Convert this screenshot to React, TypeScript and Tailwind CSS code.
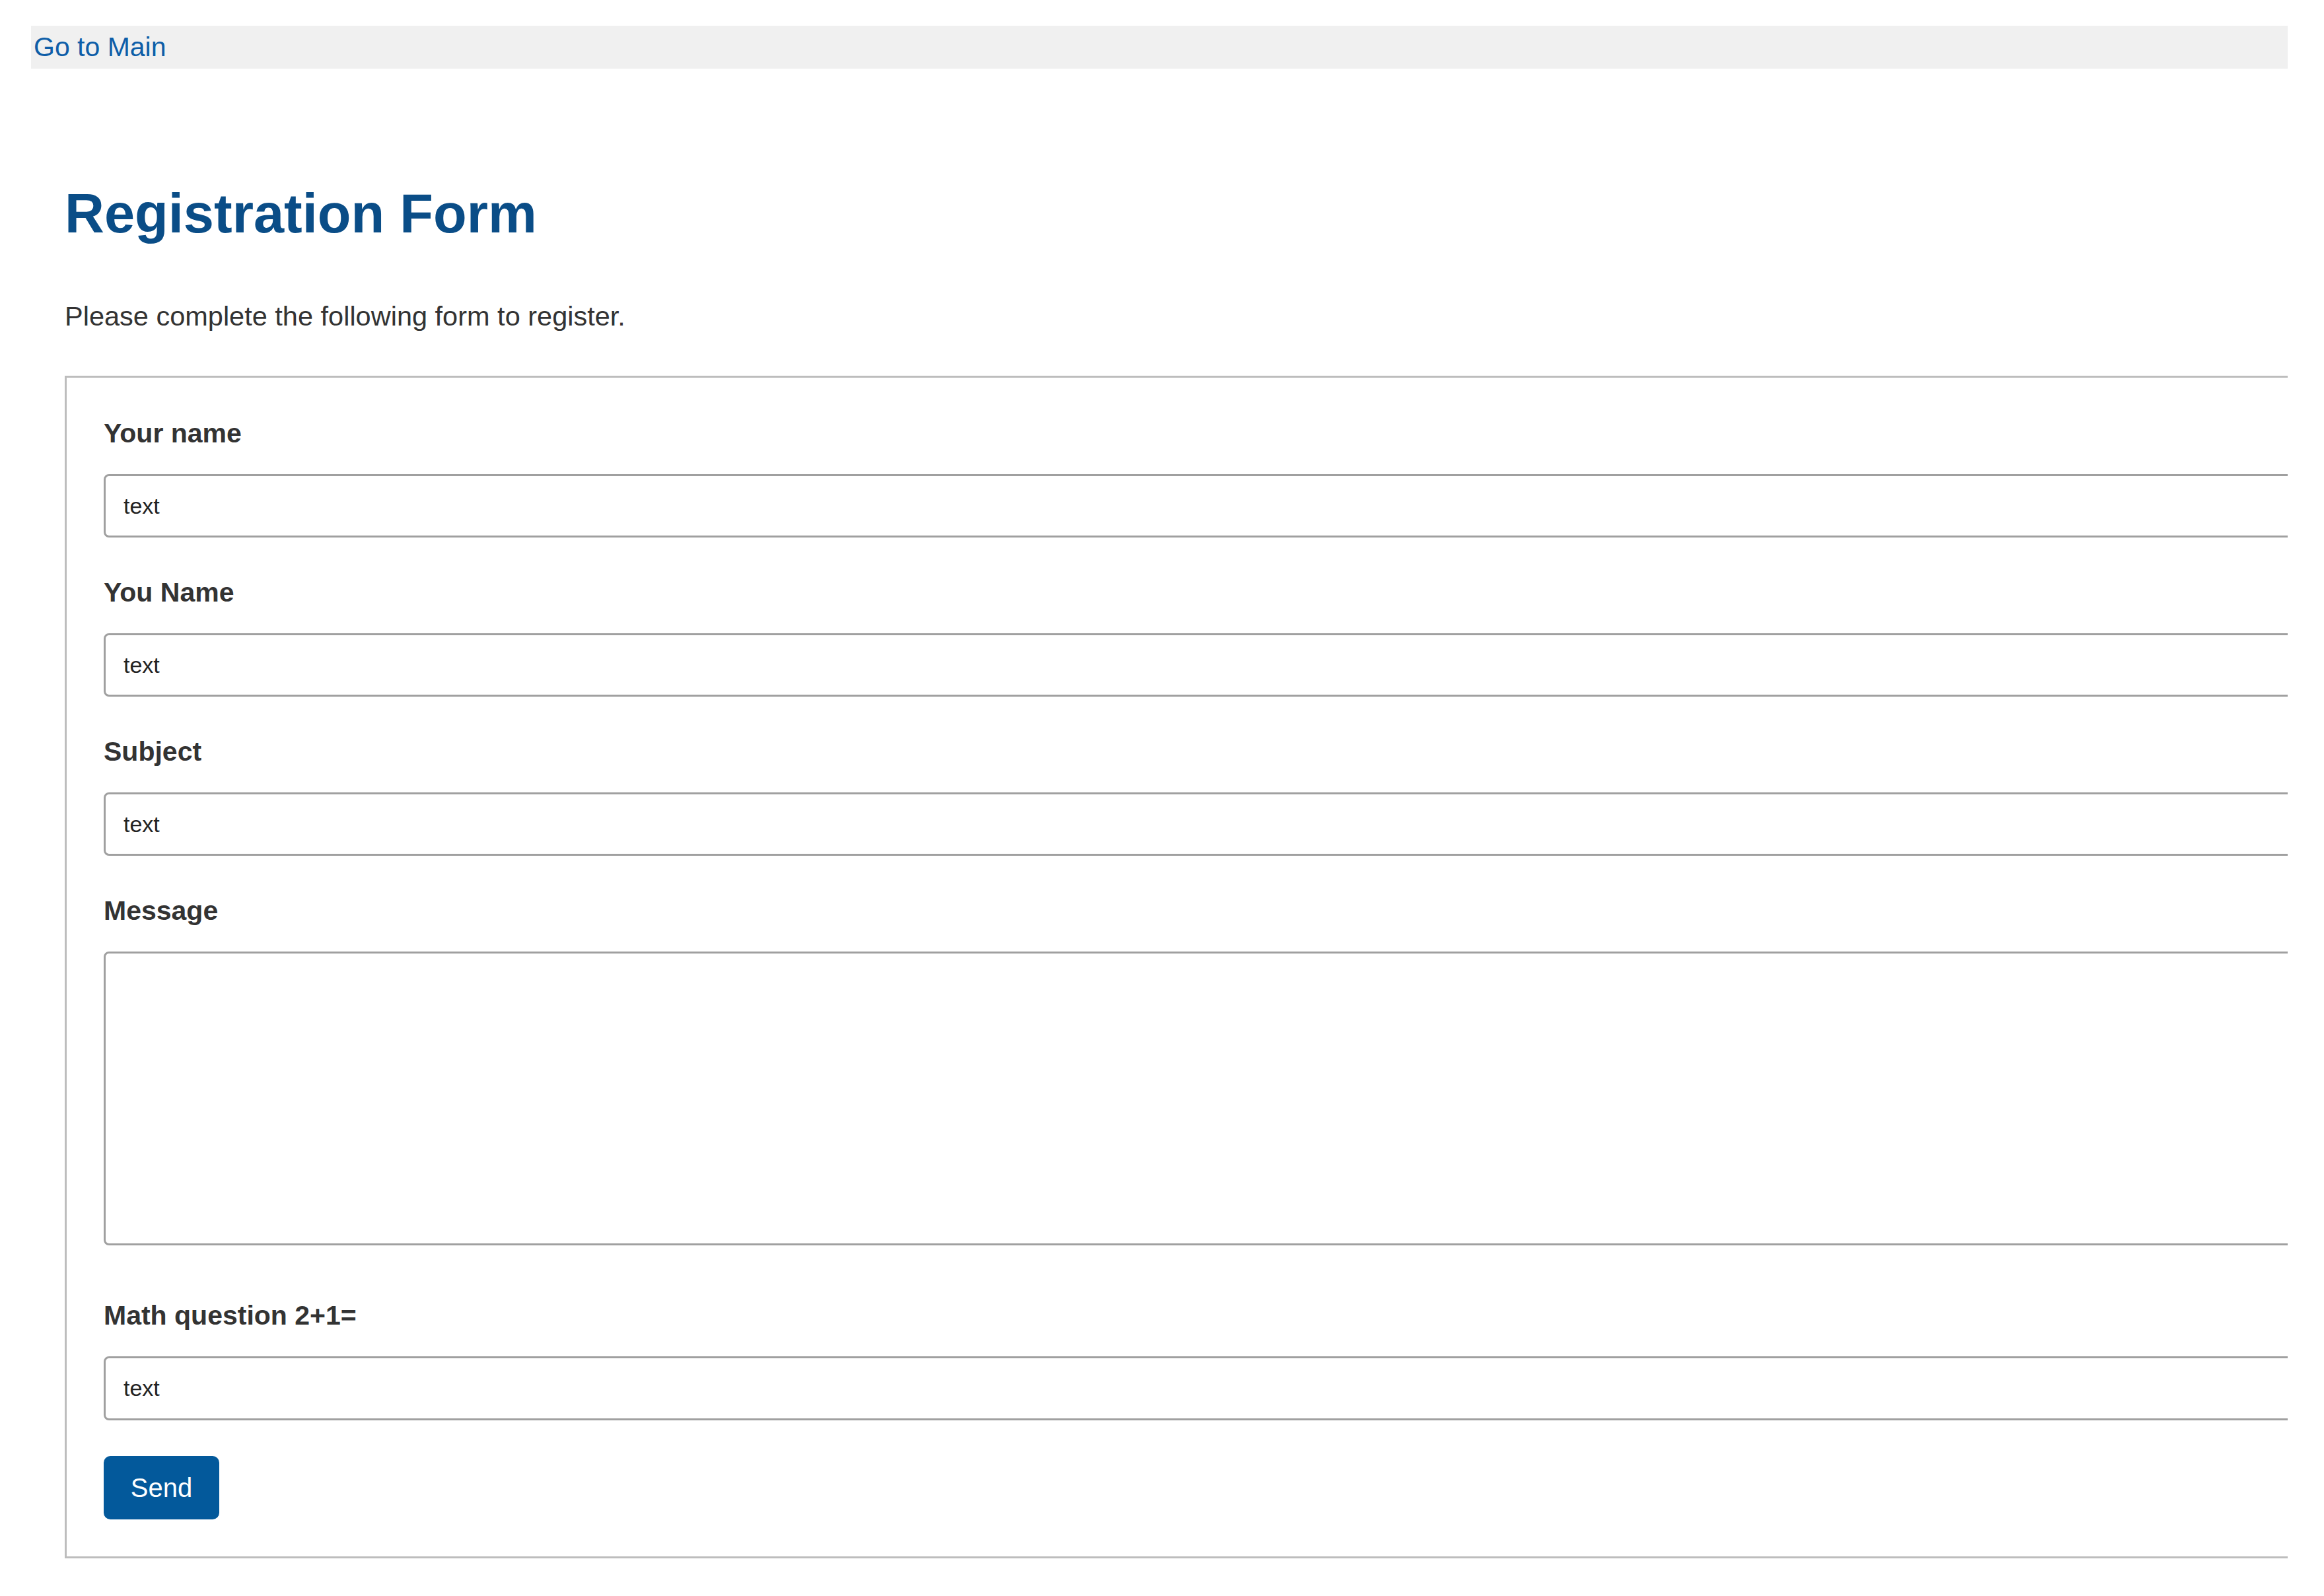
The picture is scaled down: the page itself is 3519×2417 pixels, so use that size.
import React from "react";

type Field = {
  id: string;
  label: string;
  multiline?: boolean;
};

const fields: Field[] = [
  { id: "name", label: "Your name" },
  { id: "name2", label: "You Name" },
  { id: "subject", label: "Subject" },
  { id: "message", label: "Message", multiline: true },
];

export default function App() {
  return (
    <div className="min-h-screen bg-white font-['Liberation_Sans',Arial,sans-serif]">
      <div className="w-[3464px] overflow-hidden pt-[39px] pb-[60px]">
        <div className="ml-[47px] h-[65px] bg-[#f0f0f0] pl-[4px] text-[41px] leading-[65px]">
          <a href="#" className="text-[#0e5ea8]">
            Go to Main
          </a>
        </div>

        <div className="pl-[98px]">
          <h1 className="mt-[178px] text-[83px] font-bold leading-none text-[#0a4d87]">
            Registration Form
          </h1>
          <p className="mt-[90px] text-[41.5px] leading-[48px] text-[#333]">
            Please complete the following form to register.
          </p>

          <form
            className="mt-[66px] w-[3420px] border-[3px] border-[#bdbdbd] pt-[60px] pl-[56px] pb-[56px]"
            onSubmit={(e) => e.preventDefault()}
          >
            {fields.map((f, i) => (
              <div key={f.id} className={i === 0 ? "" : "mt-[59px]"}>
                <label
                  htmlFor={f.id}
                  className="block text-[41px] font-bold leading-[48px] text-[#333]"
                >
                  {f.label}
                </label>
                {f.multiline ? (
                  <textarea
                    id={f.id}
                    className="mt-[38px] block h-[445px] w-full resize-none rounded-[8px] border-[3px] border-[#a0a0a0] bg-white px-[27px] py-[20px] text-[34px] text-[#222] outline-none"
                  />
                ) : (
                  <input
                    id={f.id}
                    type="text"
                    defaultValue="text"
                    className="mt-[38px] block h-[96px] w-full rounded-[8px] border-[3px] border-[#a0a0a0] bg-white px-[27px] text-[34px] text-[#222] outline-none"
                  />
                )}
              </div>
            ))}

            <div className="mt-[82px]">
              <label
                htmlFor="math"
                className="block text-[41px] font-bold leading-[48px] text-[#333]"
              >
                Math question 2+1=
              </label>
              <input
                id="math"
                type="text"
                defaultValue="text"
                className="mt-[38px] block h-[97px] w-full rounded-[8px] border-[3px] border-[#a0a0a0] bg-white px-[27px] text-[34px] text-[#222] outline-none"
              />
            </div>

            <button
              type="submit"
              className="mt-[54px] block h-[96px] w-[175px] rounded-[10px] bg-[#03599b] text-[40px] text-white"
            >
              Send
            </button>
          </form>
        </div>
      </div>
    </div>
  );
}
